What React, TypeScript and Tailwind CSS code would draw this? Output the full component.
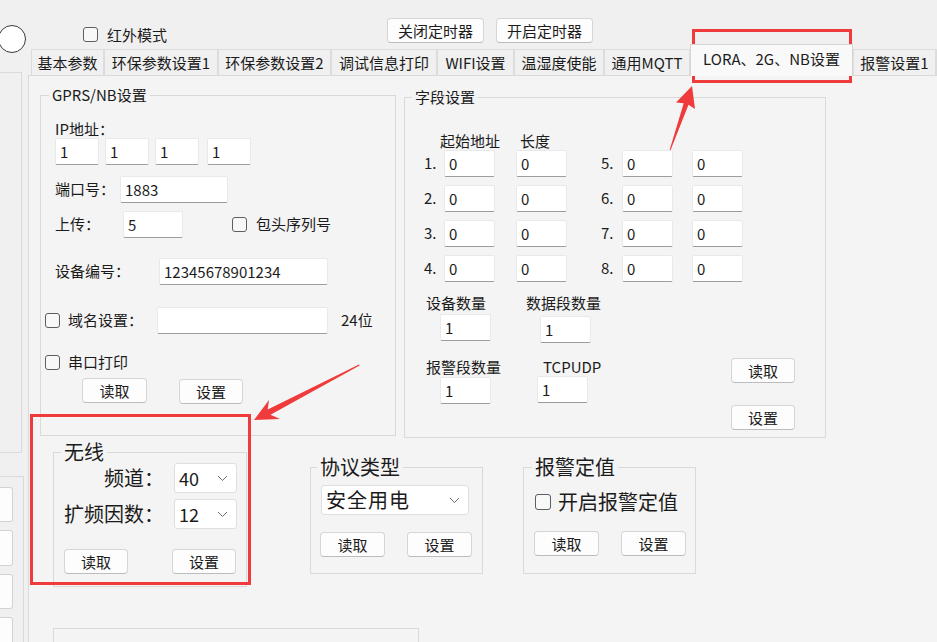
import type { ReactNode } from "react";

function Input({ className = "", value = "" }: { className?: string; value?: string }) {
  return (
    <div className={`h-[27px] shrink-0 bg-white border border-[#e9e9e9] border-b-[#9d9d9d] rounded-[2px] pl-[4px] text-[15px] leading-[25px] ${className}`}>
      {value}
    </div>
  );
}

function Btn({ children, className = "" }: { children: ReactNode; className?: string }) {
  return (
    <div className={`h-[25px] shrink-0 flex items-center justify-center bg-[#fdfdfd] border border-[#d5d5d5] border-b-[#bcbcbc] rounded-[4px] text-[15px] leading-none ${className}`}>
      {children}
    </div>
  );
}

function Check({ className = "w-[15px] h-[15px]" }: { className?: string }) {
  return <div className={`shrink-0 rounded-[3px] border border-[#5e5e5e] bg-[#f8f8f8] ${className}`} />;
}

function Group({ title, className, legend, children }: { title: string; className: string; legend: string; children: ReactNode }) {
  return (
    <fieldset className={`shrink-0 border border-[#d9d9d9] ${className}`}>
      <legend className={legend}>{title}</legend>
      {children}
    </fieldset>
  );
}

function Select({ value, className = "", text = "text-[18px]" }: { value: string; className?: string; text?: string }) {
  return (
    <div className={`h-[30px] shrink-0 flex items-center justify-between bg-white border border-[#dfdfdf] rounded-[3px] pl-[4px] pr-[8px] ${className}`}>
      <span className={`${text} leading-none`}>{value}</span>
      <svg width="11" height="7" viewBox="0 0 11 7">
        <polyline points="1,1 5.5,5.5 10,1" fill="none" stroke="#6d6d6d" strokeWidth="1" />
      </svg>
    </div>
  );
}

const tabs: [string, string][] = [
  ["基本参数", "w-[73px]"],
  ["环保参数设置1", "w-[114px]"],
  ["环保参数设置2", "w-[113px]"],
  ["调试信息打印", "w-[106px]"],
  ["WIFI设置", "w-[77px]"],
  ["温湿度使能", "w-[90px]"],
  ["通用MQTT", "w-[86px]"],
];

const fieldRows = [
  ["1.", "5."],
  ["2.", "6."],
  ["3.", "7."],
  ["4.", "8."],
];

export default function App() {
  return (
    <div className="relative flex w-[937px] h-[642px] overflow-hidden bg-[#f0f0f0] text-[#1b1b1b] font-['Noto_Sans_CJK_SC','Noto_Sans',sans-serif]">
      {/* left strip */}
      <div className="w-[28px] shrink-0 flex flex-col">
        <div className="shrink-0 mt-[25px] -ml-[2px] w-[28px] h-[28px] rounded-full border-[1.5px] border-[#3a3a3a] bg-white" />
        <div className="shrink-0 mt-[19px] w-[22px] h-[381px] border-t border-r border-b border-[#dadada]" />
        <div className="mt-[23px] flex-1 min-h-0 overflow-hidden w-[24px] border-t border-r border-[#dadada] pt-[10px] flex flex-col gap-[8px]">
          <div className="shrink-0 w-[13px] h-[35px] bg-[#fdfdfd] border border-l-0 border-[#d3d3d3] rounded-r-[3px]" />
          <div className="shrink-0 w-[13px] h-[36px] bg-[#fdfdfd] border border-l-0 border-[#d3d3d3] rounded-r-[3px]" />
          <div className="shrink-0 w-[13px] h-[35px] bg-[#fdfdfd] border border-l-0 border-[#d3d3d3] rounded-r-[3px]" />
          <div className="shrink-0 w-[13px] h-[35px] bg-[#fdfdfd] border border-l-0 border-[#d3d3d3] rounded-r-[3px]" />
        </div>
      </div>

      {/* main column */}
      <div className="flex-1 flex flex-col">
        <div className="h-[49px] shrink-0 flex items-start">
          <div className="ml-[55px] mt-[27px] w-[304px] flex items-center">
            <Check />
            <span className="ml-[9px] text-[15px] leading-none">红外模式</span>
          </div>
          <Btn className="mt-[18px] w-[97px]">关闭定时器</Btn>
          <Btn className="mt-[18px] ml-[12px] w-[97px]">开启定时器</Btn>
        </div>

        <div className="h-[26px] shrink-0 flex pl-[3px]">
          {tabs.map(([t, w]) => (
            <div key={t} className={`${w} h-[26px] shrink-0 flex items-center justify-center border-t border-l border-r border-[#dcdcdc] text-[15px] leading-none`}>
              {t}
            </div>
          ))}
          <div className="relative z-10 w-[163px] h-[32px] -mt-[5px] shrink-0 flex items-center justify-center pb-[4px] bg-[#f9f9f9] border-t border-l border-r border-[#d6d6d6] text-[15px] leading-none">
            LORA、2G、NB设置
          </div>
          <div className="w-[83px] h-[26px] shrink-0 flex items-center justify-center border-t border-l border-r border-[#dcdcdc] text-[15px] leading-none">
            报警设置1
          </div>
          <div className="w-[40px] h-[26px] shrink-0 border-t border-l border-[#dcdcdc]" />
        </div>

        {/* tab page */}
        <div className="flex-1 bg-[#f4f4f4] border-t border-l border-[#d9d9d9]">
          <div className="flex items-start">
            <Group title="GPRS/NB设置" className="ml-[11px] mt-[9px] w-[356px] h-[351px]" legend="ml-[8px] px-[3px] text-[15px] leading-[20px]">
              <div className="pl-[14px] mt-[15px] h-[18px] leading-[18px] text-[15px]">IP地址：</div>
              <div className="flex pl-[14px] gap-[6px]">
                <Input className="w-[44px]" value="1" />
                <Input className="w-[44px]" value="1" />
                <Input className="w-[44px] mr-[2px]" value="1" />
                <Input className="w-[44px]" value="1" />
              </div>
              <div className="flex items-center mt-[11px] pl-[14px] text-[15px]">
                <span className="w-[65px]">端口号：</span>
                <Input className="w-[108px]" value="1883" />
              </div>
              <div className="flex items-center mt-[8px] pl-[14px] text-[15px]">
                <span className="w-[68px]">上传：</span>
                <Input className="w-[60px]" value="5" />
                <Check className="w-[15px] h-[15px] ml-[49px]" />
                <span className="ml-[9px]">包头序列号</span>
              </div>
              <div className="flex items-center mt-[20px] pl-[14px] text-[15px]">
                <span className="w-[104px]">设备编号：</span>
                <Input className="w-[169px]" value="12345678901234" />
              </div>
              <div className="flex items-center mt-[22px] pl-[4px] text-[15px]">
                <Check />
                <span className="ml-[8px] w-[89px]">域名设置：</span>
                <Input className="w-[171px]" />
                <span className="ml-[13px]">24位</span>
              </div>
              <div className="flex items-center h-[20px] mt-[18px] pl-[4px] text-[15px]">
                <Check />
                <span className="ml-[8px]">串口打印</span>
              </div>
              <div className="flex items-start mt-[6px] pl-[41px]">
                <Btn className="w-[65px]">读取</Btn>
                <Btn className="w-[64px] ml-[32px] mt-[1px]">设置</Btn>
              </div>
            </Group>

            <Group title="字段设置" className="ml-[8px] mt-[11px] w-[422px] h-[351px]" legend="ml-[7px] px-[3px] text-[15px] leading-[20px]">
              <div className="flex mt-[25px] pl-[35px] h-[18px] leading-[18px] text-[15px]">
                <span>起始地址</span>
                <span className="ml-[20px]">长度</span>
              </div>
              <div className="flex flex-col gap-[8px]">
                {fieldRows.map(([a, b]) => (
                  <div key={a} className="flex items-center h-[27px] pl-[19px] text-[15px]">
                    <span className="w-[20px]">{a}</span>
                    <Input className="w-[51px]" value="0" />
                    <Input className="w-[51px] ml-[21px]" value="0" />
                    <span className="w-[21px] ml-[34px]">{b}</span>
                    <Input className="w-[51px]" value="0" />
                    <Input className="w-[51px] ml-[19px]" value="0" />
                  </div>
                ))}
              </div>
              <div className="flex mt-[12px] text-[15px]">
                <div className="w-[326px] shrink-0">
                  <div className="flex items-start">
                    <div className="pl-[21px] w-[121px]">
                      <div className="h-[18px] leading-[18px]">设备数量</div>
                      <Input className="w-[51px] ml-[14px] mt-[2px]" value="1" />
                    </div>
                    <div>
                      <div className="h-[18px] leading-[18px]">数据段数量</div>
                      <Input className="w-[51px] ml-[14px] mt-[4px]" value="1" />
                    </div>
                  </div>
                  <div className="flex items-start mt-[15px]">
                    <div className="pl-[21px] w-[132px]">
                      <div className="h-[18px] leading-[18px]">报警段数量</div>
                      <Input className="w-[51px] ml-[14px] mt-[1px]" value="1" />
                    </div>
                    <div>
                      <div className="h-[18px] leading-[18px] pl-[6px]">TCPUDP</div>
                      <Input className="w-[51px]" value="1" />
                    </div>
                  </div>
                </div>
                <div className="flex flex-col">
                  <Btn className="w-[64px] mt-[64px]">读取</Btn>
                  <Btn className="w-[64px] mt-[22px]">设置</Btn>
                </div>
              </div>
            </Group>
          </div>

          <div className="flex items-start mt-[3px]">
            <Group title="无线" className="ml-[24px] w-[194px] h-[146px]" legend="ml-[7px] px-[3px] text-[20px] leading-[22px]">
              <div className="flex items-center h-[30px]">
                <div className="w-[110px] text-right text-[20px] leading-none">频道：</div>
                <Select className="ml-[10px] w-[63px]" value="40" />
              </div>
              <div className="flex items-center h-[30px] mt-[6px]">
                <div className="w-[110px] text-right text-[20px] leading-none">扩频因数：</div>
                <Select className="ml-[10px] w-[63px]" value="12" />
              </div>
              <div className="flex mt-[20px] pl-[10px]">
                <Btn className="w-[64px]">读取</Btn>
                <Btn className="w-[64px] ml-[44px]">设置</Btn>
              </div>
            </Group>

            <Group title="协议类型" className="ml-[63px] mt-[15px] w-[173px] h-[118px]" legend="ml-[6px] px-[3px] text-[20px] leading-[22px]">
              <Select className="mt-[7px] ml-[10px] w-[148px]" value="安全用电" text="text-[20px] tracking-[1px]" />
              <div className="flex mt-[17px] pl-[9px]">
                <Btn className="w-[65px]">读取</Btn>
                <Btn className="w-[65px] ml-[22px]">设置</Btn>
              </div>
            </Group>

            <Group title="报警定值" className="ml-[40px] mt-[15px] w-[173px] h-[118px]" legend="ml-[8px] px-[3px] text-[20px] leading-[22px]">
              <div className="flex items-center h-[24px] mt-[12px] pl-[11px]">
                <Check className="w-[16px] h-[16px]" />
                <span className="ml-[7px] text-[20px] leading-none">开启报警定值</span>
              </div>
              <div className="flex mt-[17px] pl-[10px]">
                <Btn className="w-[65px]">读取</Btn>
                <Btn className="w-[65px] ml-[22px]">设置</Btn>
              </div>
            </Group>
          </div>

          <div className="ml-[24px] mt-[41px] w-[366px] h-[40px] border border-[#dadada]" />
        </div>
      </div>

      {/* annotation overlays */}
      <div className="absolute left-[692px] top-[29px] w-[160px] h-[54px] border-[3px] border-[#ef3b3b] pointer-events-none" />
      <div className="absolute left-[30px] top-[414px] w-[221px] h-[171px] border-[3px] border-[#ef3b3b] pointer-events-none" />
      <svg className="absolute left-0 top-0 pointer-events-none" width="937" height="642" viewBox="0 0 937 642">
        <polygon points="692,86 695,109 688.5,104.8 670.6,150 669.6,150 683.7,103.2 676,102.6" fill="#ef3b3b" />
        <polygon points="254,420 269,400 267.7,409.4 359,364.4 359.6,365.4 270.5,414.8 280,419" fill="#ef3b3b" />
      </svg>
    </div>
  );
}
